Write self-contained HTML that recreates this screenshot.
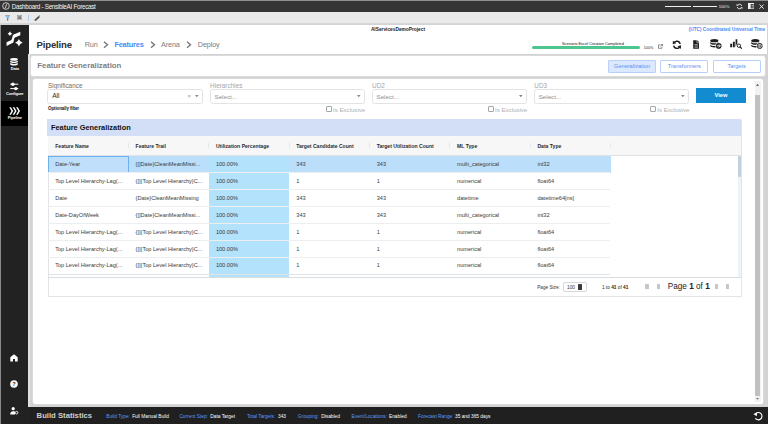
<!DOCTYPE html>
<html>
<head>
<meta charset="utf-8">
<title>Dashboard - SensibleAI Forecast</title>
<style>
*{box-sizing:border-box;margin:0;padding:0}
html,body{width:768px;height:424px;overflow:hidden}
body{position:relative;background:#d3d3d3;font-family:"Liberation Sans",sans-serif;color:#333}
.abs{position:absolute}
.t{position:absolute;white-space:nowrap;line-height:1;transform:translateY(-50%)}
.b{font-weight:bold}
/* title bar */
#titlebar{left:0;top:0;width:768px;height:12px;background:#353535;border-top:1px solid #8e8e8e}
#toolbar{left:0;top:11.8px;width:768px;height:12.7px;background:#e9e9e9;border-bottom:0.6px solid #d6d6d6}
/* sidebar */
#sidebar{left:0;top:24.5px;width:28.5px;height:400px;background:#222;border-left:1px solid #8a8a8a}
#navactive{left:1px;top:101.3px;width:27.5px;height:24.3px;background:#000}
.navlbl{color:#fff;font-weight:bold;font-size:4px;letter-spacing:-0.17px;text-align:center;width:27.5px;left:1px}
/* header */
#header{left:28.8px;top:24.5px;width:738.2px;height:29.3px;background:#fff}
.crumb{font-size:7.3px;letter-spacing:-0.15px;color:#7d7d7d}
.chev{stroke:#747474;stroke-width:1.35;fill:none}
/* card */
#card{left:31.2px;top:56.4px;width:733.5px;height:20px;background:#fff;border-radius:2.5px;box-shadow:0 0 0 0.5px #e2e2e2}
.btn{top:60.4px;height:12.2px;width:48.2px;border:0.7px solid #b9d0fb;border-radius:1px;background:#fff}
.btnt{font-size:5.6px;color:#5b8ff0}
/* panel */
#panel{left:32.5px;top:78.8px;width:730.5px;height:325.3px;background:#fff;border-radius:2.5px;box-shadow:0 0 0 0.5px #e2e2e2}
.sel{top:89px;height:15px;width:155.2px;border:0.7px solid #e3e3e3;border-radius:2.5px;background:#fff}
.lbl{font-size:6.4px;color:#acacac}
.selt{font-size:6.2px;color:#8e8e8e}
.exc{font-size:6.2px;color:#b0b0b0;letter-spacing:-0.05px}
.cb{width:5.6px;height:5.6px;border:0.6px solid #a6a6a6;border-radius:1px;background:#fff;top:106.3px}
/* table */
#tbl{left:47.5px;top:119.5px;width:694px;height:177.2px;border:0.7px solid #e2e4e6;background:#fff}
#band{left:47.2px;top:119.3px;width:694.2px;height:16.3px;background:#d3dff7}
#thead{left:48px;top:135.6px;width:693px;height:20.1px;background:#f7f7f7;border-bottom:0.6px solid #e0e3e5}
.th{font-size:5.1px;font-weight:bold;color:#2c2c2c}
.td{font-size:5.6px;color:#3a3a3a}
.sep{width:0.7px;height:5.8px;background:#e4e6e8;top:142.6px}
.rowline{left:48px;width:562.4px;height:0.6px;background:#eceeef}
#bottombar{left:28.5px;top:407px;width:740px;height:17px;background:#202020}
.bs{font-size:4.8px}
.bl{color:#5a98ff}
.wh{color:#fff}
</style>
</head>
<body>
<!-- title bar -->
<div class="abs" id="titlebar"></div>
<div class="abs" id="toolbar"></div>
<svg class="abs" style="left:1.6px;top:2.2px" width="8" height="8" viewBox="0 0 16 16"><circle cx="8" cy="8" r="6.6" fill="none" stroke="#f2f2f2" stroke-width="1.5"/><path d="M10.6 3.2C7.5 5 8.9 10.5 5.4 12.8" stroke="#f2f2f2" stroke-width="1.7" fill="none"/></svg>
<div class="t wh" style="left:11.8px;top:6.6px;font-size:6.3px;letter-spacing:-0.29px;color:#f4f4f4" id="ttl">Dashboard - SensibleAI Forecast</div>
<div class="abs" style="left:665px;top:5.9px;width:26.2px;height:0.8px;background:#f0f0f0"></div>
<div class="abs" style="left:693.3px;top:5.9px;width:23.8px;height:0.8px;background:#f0f0f0"></div>
<div class="t" style="left:718.8px;top:6.5px;font-size:4.1px;color:#e8e8e8" id="zoom">100%</div>
<svg class="abs" style="left:735.5px;top:3px" width="7" height="7" viewBox="0 0 14 14"><path d="M11.5 6A4.6 4.6 0 0 0 3.4 4.1M2.5 8A4.6 4.6 0 0 0 10.6 9.9" stroke="#eee" stroke-width="1.7" fill="none"/><path d="M1.4 1.8L5.4 5.2L1.2 6.2ZM12.6 12.2L8.6 8.8L12.8 7.8Z" fill="#eee"/></svg>
<svg class="abs" style="left:747.8px;top:2.9px" width="6.6" height="6.4" viewBox="0 0 13.2 12.8"><rect x="1" y="1" width="11.2" height="10.8" fill="none" stroke="#f2f2f2" stroke-width="2"/><rect x="1" y="1" width="4.4" height="10.800" fill="#f2f2f2"/><path d="M7 4.800h3.400M7 8h3.400" stroke="#f2f2f2" stroke-width="1.200"/></svg>
<svg class="abs" style="left:758.8px;top:3.8px" width="5.2" height="5.2" viewBox="0 0 10 10"><path d="M1 1L9 9M9 1L1 9" stroke="#f2f2f2" stroke-width="1.8"/></svg>
<!-- toolbar icons -->
<svg class="abs" style="left:5px;top:14.8px" width="5.4" height="6" viewBox="0 0 11 12"><path d="M0.3 0.4h10.4v1.5H0.3z" fill="#8b8f92"/><path d="M0.8 2.6h9.4L6.6 7.2H4.4z" fill="#6fb6ea"/><path d="M4.4 7.2h2.2v3.2l-2.2 1.2z" fill="#555"/></svg>
<svg class="abs" style="left:17.2px;top:15px" width="5.2" height="5.4" viewBox="0 0 10 10"><rect x="0.5" y="0.5" width="9" height="9" fill="#cfcfcf" stroke="#8a8a8a"/><rect x="2.4" y="2.6" width="5.2" height="4.4" fill="#555"/><path d="M3.4 4.6l1.2 1.2 2-2.4" stroke="#e8e8e8" stroke-width="0.9" fill="none"/></svg>
<div class="abs" style="left:27.9px;top:15px;width:0.7px;height:5.6px;background:#a9c8ee"></div>
<svg class="abs" style="left:33.6px;top:14.5px" width="6.6" height="6.4" viewBox="0 0 13 13"><path d="M1 12.4l1-3.6L9 1.8l2.6 2.6-7 7z" fill="#4e4e4e"/><path d="M9 1.8l1.2-1.2a1 1 0 0 1 1.4 0l1.2 1.2a1 1 0 0 1 0 1.4L11.600 4.4z" fill="#5aa9e6"/></svg>

<!-- sidebar -->
<div class="abs" id="sidebar"></div>
<div class="abs" id="navactive"></div>
<!-- logo -->
<svg class="abs" style="left:5.6px;top:31px" width="17" height="16.4" viewBox="0 0 34 32.8">
<path d="M1.1 22.5L9.9 18.7C11.6 17.6 12 15 12.6 12.600C13.200 10 13.600 8 15.200 7L28.600 1.500V8.500L17.900 13.100C16.400 14 16.300 16.400 15.800 18.400C15.300 20.600 15 22.800 13.800 23.700L1.100 29.800Z" fill="#fff"/>
<path d="M7.85 0.6000000000000005Q8.95 4.300000000000001 12.649999999999999 5.4Q8.95 6.5 7.85 10.2Q6.75 6.5 3.05 5.4Q6.75 4.300000000000001 7.85 0.6000000000000005Z" fill="#fff"/>
<path d="M25.8 15.799999999999999Q27.5 21.7 33.4 23.4Q27.5 25.099999999999998 25.8 31.0Q24.1 25.099999999999998 18.200000000000003 23.4Q24.1 21.7 25.8 15.799999999999999Z" fill="#fff"/>
</svg>
<!-- data -->
<svg class="abs" style="left:10.2px;top:58.2px" width="8" height="7.8" viewBox="0 0 16 15.600"><ellipse cx="8" cy="2.800" rx="7.600" ry="2.700" fill="#fff"/><path d="M0.400 5.200c1.200 1.600 4 2.200 7.600 2.200s6.400-0.600 7.600-2.200v2.600c-1.200 1.600-4 2.200-7.600 2.200s-6.400-0.600-7.600-2.200zM0.400 9.600c1.200 1.600 4 2.200 7.600 2.200s6.400-0.600 7.600-2.200v2.800c-1 2-4 2.800-7.600 2.800s-6.600-0.800-7.600-2.800z" fill="#fff"/></svg>
<div class="t navlbl" style="top:68.8px"><span id="n1">Data</span></div>
<!-- configure -->
<svg class="abs" style="left:10.200px;top:82px" width="8.600" height="8.800" viewBox="0 0 17.200 17.600"><path d="M0.600 4.400h16M0.600 13.200h16" stroke="#fff" stroke-width="2"/><circle cx="5.800" cy="4.400" r="3.400" fill="#fff"/><circle cx="11.600" cy="13.200" r="3.400" fill="#fff"/></svg>
<div class="t navlbl" style="top:93.900px"><span id="n2">Configure</span></div>
<!-- pipeline -->
<svg class="abs" style="left:9px;top:106.800px" width="11.200" height="8" viewBox="0 0 22.400 16"><path d="M0.600 0.600h3.400l4.400 7.400-4.400 7.400H0.600l4.400-7.400zM7.400 0.600h3.400l4.400 7.400-4.400 7.400H7.400l4.400-7.400zM14.200 0.600h3.400l4.400 7.400-4.400 7.400H14.200l4.400-7.400z" fill="#fff"/></svg>
<div class="t navlbl" style="top:117.900px"><span id="n3">Pipeline</span></div>
<!-- bottom icons -->
<svg class="abs" style="left:10.200px;top:353.800px" width="8" height="7.800" viewBox="0 0 16 15.600"><path d="M8 0.400L15.400 6.600V15.200H10V10H6v5.200H0.600V6.600Z" fill="#fff"/></svg>
<svg class="abs" style="left:10.200px;top:380.400px" width="8" height="8" viewBox="0 0 16 16"><circle cx="8" cy="8" r="7.600" fill="#fff"/><text x="8" y="12" font-size="11" font-weight="bold" text-anchor="middle" fill="#222" font-family="Liberation Sans, sans-serif">?</text></svg>
<svg class="abs" style="left:10.200px;top:407px" width="8.600" height="7.600" viewBox="0 0 17.200 15.200"><circle cx="6.400" cy="3.400" r="3.200" fill="#fff"/><path d="M0.400 14.800c0-4.400 2.400-6.400 6-6.400 1.400 0 2.600 0.300 3.600 1v5.400z" fill="#fff"/><circle cx="13.200" cy="11.400" r="2.600" fill="none" stroke="#fff" stroke-width="1.800"/></svg>

<!-- header -->
<div class="abs" id="header"></div>
<div class="t b" style="left:370.900px;top:29.600px;font-size:4.800px;color:#222" id="proj">AIServicesDemoProject</div>
<div class="t b" style="left:688.800px;top:29.900px;font-size:4.69px;color:#4a8af4" id="utc">(UTC) Coordinated Universal Time</div>
<div class="t b" style="left:36.600px;top:44.700px;font-size:9.600px;color:#2f2f2f;letter-spacing:-0.200px" id="pipe">Pipeline</div>
<div class="t crumb" style="left:84.700px;top:44.6px" id="c1">Run</div>
<div class="t crumb b" style="left:114.400px;top:44.6px;color:#4a8af4" id="c2">Features</div>
<div class="t crumb" style="left:161px;top:44.6px" id="c3">Arena</div>
<div class="t crumb" style="left:197.800px;top:44.6px" id="c4">Deploy</div>
<svg class="abs" style="left:103.200px;top:41px" width="6" height="7.400" viewBox="0 0 6 7.400"><path class="chev" d="M1 0.700L4.500 3.700L1 6.700"/></svg>
<svg class="abs" style="left:150.200px;top:41px" width="6" height="7.400" viewBox="0 0 6 7.400"><path class="chev" d="M1 0.700L4.500 3.700L1 6.700"/></svg>
<svg class="abs" style="left:186px;top:41px" width="6" height="7.400" viewBox="0 0 6 7.400"><path class="chev" d="M1 0.700L4.500 3.700L1 6.700"/></svg>
<div class="t" style="left:562px;top:43.500px;font-size:3.92px;color:#111" id="scen">Scenario Excel Creation Completed</div>
<div class="abs" style="left:532.300px;top:45.800px;width:107.700px;height:3px;border-radius:1.500px;background:#4dc591"></div>
<div class="t" style="left:643.800px;top:49px;font-size:3.7px;color:#1c1c1c" id="pct">100%</div>
<svg class="abs" style="left:657.800px;top:44.300px" width="4.800" height="4.800" viewBox="0 0 10 10"><path d="M4.400 1.800H1v7.200h7.200V5.600" fill="none" stroke="#444" stroke-width="1.200"/><path d="M5.600 0.600h3.800v3.800M9.200 0.800L4.600 5.400" fill="none" stroke="#444" stroke-width="1.300"/></svg>
<!-- header action icons -->
<svg class="abs" style="left:671.800px;top:39.600px" width="9.800" height="9.600" viewBox="0 0 20 20"><path d="M16.800 8.200A7 7 0 0 0 4.400 5.200M3.200 11.800A7 7 0 0 0 15.600 14.800" fill="none" stroke="#1d1d1d" stroke-width="3.200"/><path d="M1.600 1.400L8.600 7L1.400 9ZM18.400 18.600L11.400 13L18.600 11Z" fill="#1d1d1d"/></svg>
<svg class="abs" style="left:692.800px;top:39.800px" width="6.600" height="9" viewBox="0 0 13.200 18"><path d="M0.400 0.400H8.400L12.800 4.800V17.600H0.400Z" fill="#1d1d1d"/><path d="M7.800 0.400V5.400H12.800" fill="none" stroke="#fff" stroke-width="1.100"/><path d="M3 9h7.200M3 11.800h7.200M3 14.600h7.200" stroke="#eee" stroke-width="1.100"/></svg>
<svg class="abs" style="left:709.600px;top:39.200px" width="12" height="10" viewBox="0 0 24 20"><ellipse cx="8.600" cy="3.400" rx="8.200" ry="3.200" fill="#1d1d1d"/><path d="M0.400 6.200c1.400 1.800 4.600 2.500 8.200 2.500s6.800-0.700 8.200-2.500v2.600c-1.400 1.800-4.600 2.600-8.200 2.600s-6.800-0.800-8.200-2.600zM0.400 11.400c1.400 1.800 4.600 2.500 8.200 2.500s6.800-0.700 8.200-2.500v2.800c-1.400 2-4.600 2.800-8.200 2.800s-6.800-0.800-8.200-2.800z" fill="#1d1d1d"/><circle cx="17.400" cy="13.800" r="6.600" fill="#fff"/><circle cx="17.400" cy="13.800" r="5.600" fill="#1d1d1d"/><path d="M13.800 13.800h6.400M17.800 10.800l3 3-3 3" stroke="#fff" stroke-width="1.900" fill="none"/></svg>
<svg class="abs" style="left:729.800px;top:39.200px" width="12.400" height="10" viewBox="0 0 24.800 20"><path d="M0.400 9.400h3.800v7.200H0.400zM5.800 5.400h3.800v11.200H5.800zM11.200 0.400h3.400v9.200c-1.400 0.800-2.400 2.200-2.600 3.800l-0.800 3.200z" fill="#1d1d1d"/><circle cx="17.800" cy="13.400" r="3.400" fill="none" stroke="#1d1d1d" stroke-width="2"/><path d="M20.200 15.800l3.800 3.800" stroke="#1d1d1d" stroke-width="2.400"/></svg>
<svg class="abs" style="left:751.200px;top:39.200px" width="12" height="10" viewBox="0 0 24 20"><ellipse cx="8.600" cy="3.400" rx="8.200" ry="3.200" fill="#1d1d1d"/><path d="M0.400 6.200c1.400 1.800 4.600 2.500 8.200 2.500s6.800-0.700 8.200-2.500v2.600c-1.400 1.800-4.600 2.600-8.200 2.600s-6.800-0.800-8.200-2.600zM0.400 11.400c1.400 1.800 4.600 2.500 8.200 2.500s6.800-0.700 8.200-2.500v2.800c-1.400 2-4.600 2.800-8.200 2.800s-6.800-0.800-8.200-2.800z" fill="#1d1d1d"/><circle cx="17.400" cy="13.800" r="6.600" fill="#fff"/><circle cx="17.400" cy="13.800" r="5.600" fill="#1d1d1d"/><circle cx="17.400" cy="13.800" r="3.700" fill="none" stroke="#fff" stroke-width="1.100"/><path d="M13.600 13.800h7.600M17.400 10v7.600" stroke="#fff" stroke-width="1.100"/></svg>

<div class="abs" style="left:28.4px;top:53.8px;width:1.6px;height:353.2px;background:#e1e1e1"></div>
<!-- card -->
<div class="abs" id="card"></div>
<div class="t b" style="left:37.300px;top:66.200px;font-size:7.800px;color:#808080" id="cardt">Feature Generalization</div>
<div class="abs btn" style="left:608px;background:#dce8fd"></div>
<div class="abs btn" style="left:660.200px"></div>
<div class="abs btn" style="left:712.500px"></div>
<div class="t btnt" style="left:632.100px;top:66.600px;transform:translate(-50%,-50%)" id="b1">Generalization</div>
<div class="t btnt" style="left:684.300px;top:66.600px;transform:translate(-50%,-50%)" id="b2">Transformers</div>
<div class="t btnt" style="left:736.600px;top:66.600px;transform:translate(-50%,-50%)" id="b3">Targets</div>

<!-- panel -->
<div class="abs" id="panel"></div>
<div class="t lbl" style="left:48.0px;top:85.5px;color:#6e6e6e" id="l0">Significance</div>
<div class="abs sel" style="left:47.4px"></div>
<div class="t selt" style="left:52.2px;top:96.1px;color:#2a2a2a;font-size:6.6px" id="s0">All</div>
<div class="t" style="left:187.4px;top:96.1px;font-size:6px;color:#999">×</div>
<svg class="abs" style="left:195.0px;top:95.4px" width="3.6" height="2.2" viewBox="0 0 3.6 2.2"><path d="M0 0h3.6L1.800 2.200z" fill="#888"/></svg>
<div class="t lbl" style="left:210.1px;top:85.5px;color:#a6a6a6" id="l1">Hierarchies</div>
<div class="abs sel" style="left:209.5px"></div>
<div class="t selt" style="left:214.5px;top:96.6px" id="s1">Select...</div>
<div class="abs cb" style="left:326.0px"></div>
<div class="t exc" style="left:333.1px;top:109.5px" id="e1">Is Exclusive</div>
<svg class="abs" style="left:357.1px;top:95.4px" width="3.6" height="2.2" viewBox="0 0 3.6 2.2"><path d="M0 0h3.6L1.800 2.200z" fill="#888"/></svg>
<div class="t lbl" style="left:372.1px;top:85.5px;color:#a6a6a6" id="l2">UD2</div>
<div class="abs sel" style="left:371.5px"></div>
<div class="t selt" style="left:376.5px;top:96.6px" id="s2">Select...</div>
<div class="abs cb" style="left:488.0px"></div>
<div class="t exc" style="left:495.1px;top:109.5px" id="e2">Is Exclusive</div>
<svg class="abs" style="left:519.1px;top:95.4px" width="3.6" height="2.2" viewBox="0 0 3.6 2.2"><path d="M0 0h3.6L1.800 2.200z" fill="#888"/></svg>
<div class="t lbl" style="left:534.3px;top:85.5px;color:#a6a6a6" id="l3">UD3</div>
<div class="abs sel" style="left:533.7px"></div>
<div class="t selt" style="left:538.7px;top:96.6px" id="s3">Select...</div>
<div class="abs cb" style="left:650.2px"></div>
<div class="t exc" style="left:657.3px;top:109.5px" id="e3">Is Exclusive</div>
<svg class="abs" style="left:681.3px;top:95.4px" width="3.6" height="2.2" viewBox="0 0 3.6 2.2"><path d="M0 0h3.6L1.800 2.200z" fill="#888"/></svg>
<div class="t b" style="left:48px;top:108.700px;font-size:4.600px;letter-spacing:-0.16px;color:#1c1c1c" id="opt">Optionally filter</div>
<div class="abs" style="left:695.800px;top:88.100px;width:50.300px;height:15.300px;background:#128bd1"></div>
<div class="t b" style="left:721px;top:96.200px;font-size:5.700px;color:#fff;transform:translate(-50%,-50%)" id="view">View</div>
<div class="abs" style="left:754.800px;top:81px;width:5.900px;height:321px;background:#f1f1f1"></div>
<div class="abs" style="left:755.200px;top:94.500px;width:5px;height:301px;background:#c1c1c1"></div>
<svg class="abs" style="left:756.400px;top:84px" width="3" height="1.800" viewBox="0 0 3 1.800"><path d="M0 1.800h3L1.500 0z" fill="#444"/></svg>
<svg class="abs" style="left:756.400px;top:398px" width="3" height="1.800" viewBox="0 0 3 1.800"><path d="M0 0h3L1.500 1.800z" fill="#777"/></svg>
<div class="abs" id="tbl"></div>
<div class="abs" id="band"></div>
<div class="t b" style="left:51px;top:127.700px;font-size:7.400px;color:#111" id="tblt">Feature Generalization</div>
<div class="abs" id="thead"></div>
<div class="t th" style="left:55.2px;top:146.700px" id="h0">Feature Name</div>
<div class="abs sep" style="left:127.9px"></div>
<div class="t th" style="left:135.6px;top:146.700px" id="h1">Feature Trail</div>
<div class="abs sep" style="left:208.2px"></div>
<div class="t th" style="left:215.9px;top:146.700px" id="h2">Utilization Percentage</div>
<div class="abs sep" style="left:288.6px"></div>
<div class="t th" style="left:296.3px;top:146.700px" id="h3">Target Candidate Count</div>
<div class="abs sep" style="left:369.0px"></div>
<div class="t th" style="left:376.7px;top:146.700px" id="h4">Target Utilization Count</div>
<div class="abs sep" style="left:449.4px"></div>
<div class="t th" style="left:457.1px;top:146.700px" id="h5">ML Type</div>
<div class="abs sep" style="left:529.7px"></div>
<div class="t th" style="left:537.4px;top:146.700px" id="h6">Data Type</div>
<div class="abs sep" style="left:610.1px"></div>
<div class="abs" style="left:48px;top:155.7px;width:562.9px;height:16.9px;background:#bbdefb"></div>
<div class="abs" style="left:209.1px;top:155.7px;width:80.4px;height:120.9px;background:#b3e2fc"></div>
<div class="abs" style="left:48px;top:155.7px;width:80.7px;height:16.9px;background:#c0dffa;border:0.6px solid #6cb0ee"></div>
<div class="t td" style="left:55.2px;top:165.0px" id="r0c0">Date-Year</div>
<div class="t td" style="left:135.6px;top:165.0px" id="r0c1">{[]Date}CleanMeanMissi...</div>
<div class="t td" style="left:215.9px;top:165.0px" id="r0c2">100.00%</div>
<div class="t td" style="left:296.3px;top:165.0px" id="r0c3">343</div>
<div class="t td" style="left:376.7px;top:165.0px" id="r0c4">343</div>
<div class="t td" style="left:457.1px;top:165.0px" id="r0c5">multi_categorical</div>
<div class="t td" style="left:537.4px;top:165.0px" id="r0c6">int32</div>
<div class="abs rowline" style="top:172.3px"></div>
<div class="t td" style="left:55.2px;top:181.9px" id="r1c0">Top Level Hierarchy-Lag(...</div>
<div class="t td" style="left:135.6px;top:181.9px" id="r1c1">{[]{Top Level Hierarchy}C...</div>
<div class="t td" style="left:215.9px;top:181.9px" id="r1c2">100.00%</div>
<div class="t td" style="left:296.3px;top:181.9px" id="r1c3">1</div>
<div class="t td" style="left:376.7px;top:181.9px" id="r1c4">1</div>
<div class="t td" style="left:457.1px;top:181.9px" id="r1c5">numerical</div>
<div class="t td" style="left:537.4px;top:181.9px" id="r1c6">float64</div>
<div class="abs rowline" style="top:189.2px"></div>
<div class="t td" style="left:55.2px;top:198.8px" id="r2c0">Date</div>
<div class="t td" style="left:135.6px;top:198.8px" id="r2c1">{Date}CleanMeanMissing</div>
<div class="t td" style="left:215.9px;top:198.8px" id="r2c2">100.00%</div>
<div class="t td" style="left:296.3px;top:198.8px" id="r2c3">343</div>
<div class="t td" style="left:376.7px;top:198.8px" id="r2c4">343</div>
<div class="t td" style="left:457.1px;top:198.8px" id="r2c5">datetime</div>
<div class="t td" style="left:537.4px;top:198.8px" id="r2c6">datetime64[ns]</div>
<div class="abs rowline" style="top:206.1px"></div>
<div class="t td" style="left:55.2px;top:215.7px" id="r3c0">Date-DayOfWeek</div>
<div class="t td" style="left:135.6px;top:215.7px" id="r3c1">{[]Date}CleanMeanMissi...</div>
<div class="t td" style="left:215.9px;top:215.7px" id="r3c2">100.00%</div>
<div class="t td" style="left:296.3px;top:215.7px" id="r3c3">343</div>
<div class="t td" style="left:376.7px;top:215.7px" id="r3c4">343</div>
<div class="t td" style="left:457.1px;top:215.7px" id="r3c5">multi_categorical</div>
<div class="t td" style="left:537.4px;top:215.7px" id="r3c6">int32</div>
<div class="abs rowline" style="top:223.0px"></div>
<div class="t td" style="left:55.2px;top:232.6px" id="r4c0">Top Level Hierarchy-Lag(...</div>
<div class="t td" style="left:135.6px;top:232.6px" id="r4c1">{[]{Top Level Hierarchy}C...</div>
<div class="t td" style="left:215.9px;top:232.6px" id="r4c2">100.00%</div>
<div class="t td" style="left:296.3px;top:232.6px" id="r4c3">1</div>
<div class="t td" style="left:376.7px;top:232.6px" id="r4c4">1</div>
<div class="t td" style="left:457.1px;top:232.6px" id="r4c5">numerical</div>
<div class="t td" style="left:537.4px;top:232.6px" id="r4c6">float64</div>
<div class="abs rowline" style="top:239.9px"></div>
<div class="t td" style="left:55.2px;top:249.5px" id="r5c0">Top Level Hierarchy-Lag(...</div>
<div class="t td" style="left:135.6px;top:249.5px" id="r5c1">{[]{Top Level Hierarchy}C...</div>
<div class="t td" style="left:215.9px;top:249.5px" id="r5c2">100.00%</div>
<div class="t td" style="left:296.3px;top:249.5px" id="r5c3">1</div>
<div class="t td" style="left:376.7px;top:249.5px" id="r5c4">1</div>
<div class="t td" style="left:457.1px;top:249.5px" id="r5c5">numerical</div>
<div class="t td" style="left:537.4px;top:249.5px" id="r5c6">float64</div>
<div class="abs rowline" style="top:256.8px"></div>
<div class="t td" style="left:55.2px;top:266.4px" id="r6c0">Top Level Hierarchy-Lag(...</div>
<div class="t td" style="left:135.6px;top:266.4px" id="r6c1">{[]{Top Level Hierarchy}C...</div>
<div class="t td" style="left:215.9px;top:266.4px" id="r6c2">100.00%</div>
<div class="t td" style="left:296.3px;top:266.4px" id="r6c3">1</div>
<div class="t td" style="left:376.7px;top:266.4px" id="r6c4">1</div>
<div class="t td" style="left:457.1px;top:266.4px" id="r6c5">numerical</div>
<div class="t td" style="left:537.4px;top:266.4px" id="r6c6">float64</div>
<div class="abs rowline" style="top:273.7px;background:#dfe3e6"></div>
<div class="abs" style="left:737.800px;top:155.800px;width:3.300px;height:121px;background:#eef3f9"></div>
<div class="abs" style="left:737.800px;top:155.800px;width:3.200px;height:20.800px;background:#c2cfe0;border-radius:1px"></div>
<div class="abs" style="left:48px;top:277px;width:693px;height:0.700px;background:#d9dde0"></div>
<div class="t" style="left:537.200px;top:287.800px;font-size:4.700px;color:#333" id="ps">Page Size:</div>
<div class="abs" style="left:563px;top:281.600px;width:23.900px;height:10px;border:0.700px solid #d3d8de;border-radius:2px;background:#fff"></div>
<div class="t" style="left:567px;top:287.800px;font-size:4.800px;color:#333" id="ps100">100</div>
<div class="abs" style="left:578.200px;top:283.900px;width:3.600px;height:5.700px;background:#3a3a3a;border-radius:0.500px"></div>
<div class="t" style="left:601.900px;top:287.800px;font-size:4.750px;color:#222" id="pg1">1 to <b>41</b> of <b>41</b></div>
<div class="abs" style="left:645.4px;top:283.900px;width:3.500px;height:5.600px;background:#c4c7ca;border-radius:0.500px"></div>
<div class="abs" style="left:656.5px;top:283.900px;width:3.500px;height:5.600px;background:#c4c7ca;border-radius:0.500px"></div>
<div class="abs" style="left:714.6px;top:283.900px;width:3.500px;height:5.600px;background:#c4c7ca;border-radius:0.500px"></div>
<div class="abs" style="left:725.6px;top:283.900px;width:3.500px;height:5.600px;background:#c4c7ca;border-radius:0.500px"></div>
<div class="t" style="left:667.800px;top:287.100px;font-size:8.200px;color:#222" id="pg2">Page <b>1</b> of <b>1</b></div>
<div class="abs" id="bottombar"></div>
<div class="t b" style="left:36.600px;top:416.300px;font-size:7.700px;color:#cfcfcf" id="bst">Build Statistics</div>
<div class="t bs bl" style="left:106.25px;top:416.600px" id="sa0">Build Type:</div>
<div class="t bs wh" style="left:132.2px;top:416.600px" id="sb0">Full Manual Build</div>
<div class="t bs bl" style="left:179.4px;top:416.600px" id="sa1">Current Step:</div>
<div class="t bs wh" style="left:210.3px;top:416.600px" id="sb1">Data Target</div>
<div class="t bs bl" style="left:246.9px;top:416.600px" id="sa2">Total Targets:</div>
<div class="t bs wh" style="left:278px;top:416.600px" id="sb2">343</div>
<div class="t bs bl" style="left:297.8px;top:416.600px" id="sa3">Grouping:</div>
<div class="t bs wh" style="left:321.25px;top:416.600px" id="sb3">Disabled</div>
<div class="t bs bl" style="left:351.6px;top:416.600px" id="sa4">Event/Locations:</div>
<div class="t bs wh" style="left:389px;top:416.600px" id="sb4">Enabled</div>
<div class="t bs bl" style="left:418.1px;top:416.600px" id="sa5">Forecast Range:</div>
<div class="t bs wh" style="left:455px;top:416.600px" id="sb5">35 and 365 days</div>
<svg class="abs" style="left:753px;top:411.200px" width="10.200" height="9.400" viewBox="0 0 20.400 18.800"><path d="M5.200 5.200A7.400 7.400 0 1 1 4.600 14.600" fill="none" stroke="#fff" stroke-width="2.200"/><path d="M0.600 6.200L8.400 3.200L7.400 10.400Z" fill="#fff"/></svg>
</body>
</html>
